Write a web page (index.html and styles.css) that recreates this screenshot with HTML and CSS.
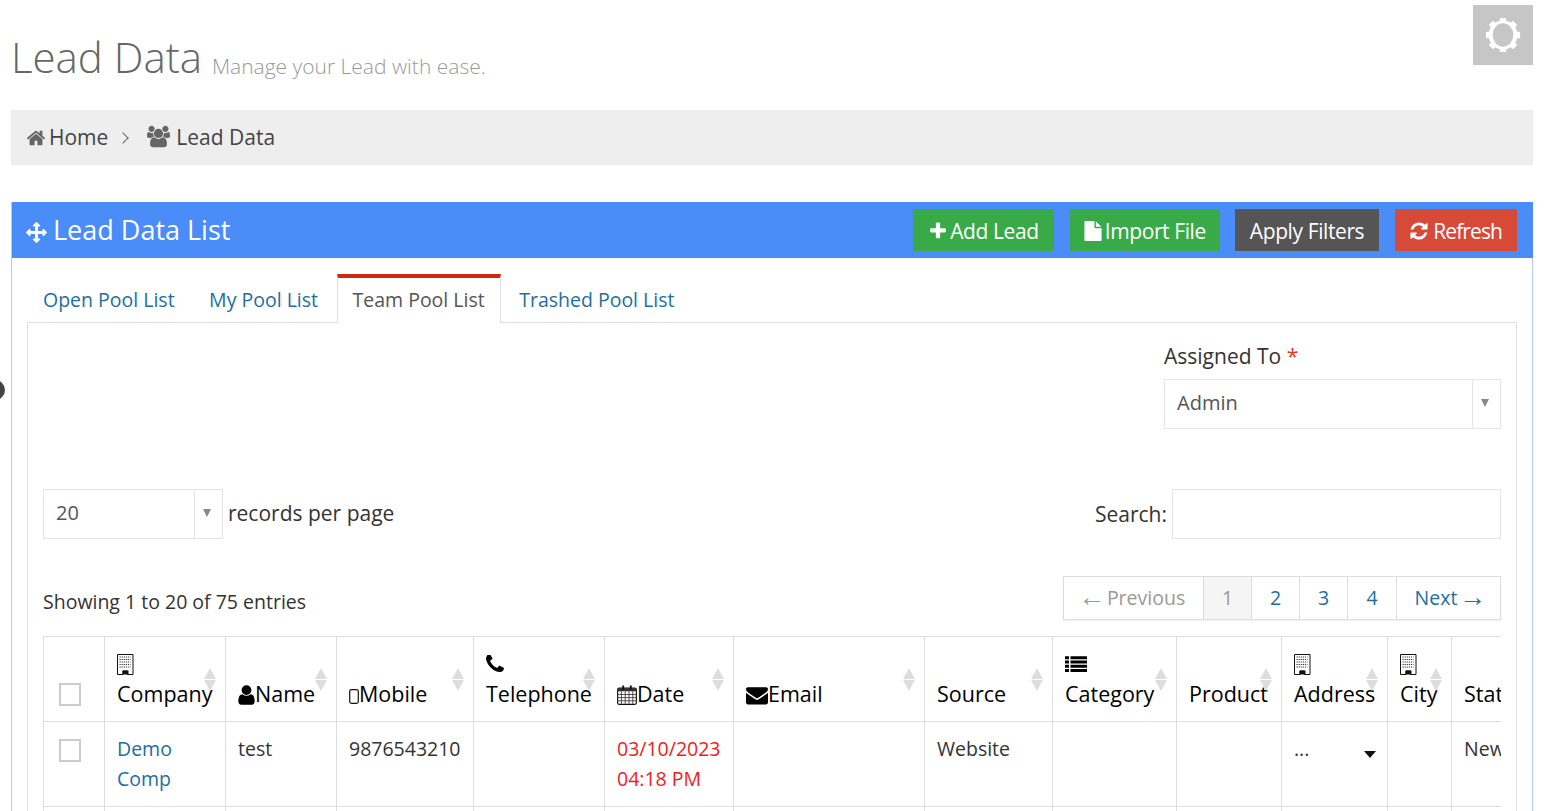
FILE: index.html
```html
<!DOCTYPE html>
<html lang="en">
<head>
<meta charset="utf-8">
<title>Lead Data</title>
<link rel="stylesheet" href="styles.css">
</head>
<body>
<svg class="defs" aria-hidden="true">
  <symbol id="i-home" viewBox="0 0 1792 1792"><path d="M1472 992v480q0 26-19 45t-45 19h-384v-384h-256v384h-384q-26 0-45-19t-19-45v-480q0-1 .5-3t.5-3l575-474 575 474q1 2 1 6zm223-69l-62 74q-8 9-21 11h-3q-13 0-21-7l-692-577-692 577q-12 8-24 7-13-2-21-11l-62-74q-8-10-7-23.500t11-21.500l719-599q32-26 76-26t76 26l244 204v-195q0-14 9-23t23-9h192q14 0 23 9t9 23v408l219 182q10 8 11 21.500t-7 23.500z"/></symbol>
  <symbol id="i-users" viewBox="0 0 1920 1792"><path d="M593 896q-162 5-265 128h-134q-82 0-138-40.500t-56-118.500q0-353 124-353 6 0 43.500 21t97.500 42.500 119 21.500q67 0 133-23-5 37-5 66 0 139 81 256zm1071 637q0 120-73 189.500t-194 69.500h-874q-121 0-194-69.500t-73-189.500q0-53 3.500-103.500t14-109 26.500-108.500 43-97.500 62-81 85.500-53.500 111.500-20q10 0 43 21.500t73 48 107 48 135 21.500 135-21.500 107-48 73-48 43-21.500q61 0 111.500 20t85.500 53.500 62 81 43 97.500 26.500 108.500 14 109 3.500 103.500zm-1024-1277q0 106-75 181t-181 75-181-75-75-181 75-181 181-75 181 75 75 181zm704 384q0 159-112.500 271.500t-271.500 112.500-271.500-112.500-112.500-271.500 112.500-271.500 271.500-112.500 271.500 112.500 112.500 271.500zm576 225q0 78-56 118.500t-138 40.500h-134q-103-123-265-128 81-117 81-256 0-29-5-66 66 23 133 23 59 0 119-21.500t97.500-42.500 43.500-21q124 0 124 353zm-128-609q0 106-75 181t-181 75-181-75-75-181 75-181 181-75 181 75 75 181z"/></symbol>
  <symbol id="i-arrows" viewBox="0 0 1792 1792"><path d="M1792 896q0 26-19 45l-256 256q-19 19-45 19t-45-19-19-45v-128h-384v384h128q26 0 45 19t19 45-19 45l-256 256q-19 19-45 19t-45-19l-256-256q-19-19-19-45t19-45 45-19h128v-384h-384v128q0 26-19 45t-45 19-45-19l-256-256q-19-19-19-45t19-45l256-256q19-19 45-19t45 19 19 45v128h384v-384h-128q-26 0-45-19t-19-45 19-45l256-256q19-19 45-19t45 19l256 256q19 19 19 45t-19 45-45 19h-128v384h384v-128q0-26 19-45t45-19 45 19l256 256q19 19 19 45z"/></symbol>
  <symbol id="i-plus" viewBox="0 0 1792 1792"><path d="M1600 736v192q0 40-28 68t-68 28h-416v416q0 40-28 68t-68 28h-192q-40 0-68-28t-28-68v-416h-416q-40 0-68-28t-28-68v-192q0-40 28-68t68-28h416v-416q0-40 28-68t68-28h192q40 0 68 28t28 68v416h416q40 0 68 28t28 68z"/></symbol>
  <symbol id="i-file" viewBox="0 0 1792 1792"><path d="M1152 512v-472q22 14 36 28l408 408q14 14 28 36h-472zm-128 32q0 40 28 68t68 28h544v1056q0 40-28 68t-68 28h-1344q-40 0-68-28t-28-68v-1600q0-40 28-68t68-28h800v544z"/></symbol>
  <symbol id="i-refresh" viewBox="0 0 1792 1792"><path d="M1639 1056q0 5-1 7-64 268-268 434.500t-478 166.500q-146 0-282.500-55t-243.500-157l-129 129q-19 19-45 19t-45-19-19-45v-448q0-26 19-45t45-19h448q26 0 45 19t19 45-19 45l-137 137q71 66 161 102t187 36q134 0 250-65t186-179q11-17 53-117 8-23 30-23h192q13 0 22.500 9.500t9.500 22.500zm25-800v448q0 26-19 45t-45 19h-448q-26 0-45-19t-19-45 19-45l138-138q-148-137-349-137-134 0-250 65t-186 179q-11 17-53 117-8 23-30 23h-199q-13 0-22.500-9.500t-9.500-22.500v-7q65-268 270-434.500t480-166.500q146 0 284 55.500t245 156.500l130-129q19-19 45-19t45 19 19 45z"/></symbol>
  <symbol id="i-user" viewBox="240 110 1312 1570"><path d="M1536 1399q0 109-62.500 187t-150.500 78h-854q-88 0-150.500-78t-62.500-187q0-85 8.500-160.500t31.500-152 58.500-131 94-89 134.500-34.500q131 128 313 128t313-128q76 0 134.500 34.500t94 89 58.500 131 31.500 152 8.500 160.500zm-256-887q0 159-112.500 271.500t-271.500 112.500-271.500-112.500-112.500-271.500 112.500-271.500 271.500-112.500 271.500 112.500 112.500 271.500z"/></symbol>
  <symbol id="i-mail" viewBox="0 0 1792 1792"><path d="M1792 710v794q0 66-47 113t-113 47h-1472q-66 0-113-47t-47-113v-794q44 49 101 87 362 246 497 345 57 42 92.500 65.500t94.500 48 110 24.500h2q51 0 110-24.500t94.500-48 92.500-65.500q170-123 498-345 57-39 100-87zm0-294q0 79-49 151t-122 123q-376 261-468 325-10 7-42.500 30.500t-54 38-52 32.500-57.500 27-50 9h-2q-23 0-50-9t-57.500-27-52-32.500-54-38-42.500-30.500q-91-64-262-182.500t-205-142.500q-62-42-117-115.500t-55-136.500q0-78 41.500-130t118.500-52h1472q65 0 112.500 47t47.500 113z"/></symbol>
  <symbol id="i-phone" viewBox="190 190 1420 1420"><path d="M1600 1240q0 27-10 70.500t-21 68.500q-21 50-122 106-94 51-186 51-27 0-53-3.500t-57.500-12.500-47-14.500-55.500-20.500-49-18q-98-35-175-83-127-79-264-216t-216-264q-48-77-83-175-3-9-18-49t-20.500-55.500-14.500-47-12.500-57.500-3.500-53q0-92 51-186 56-101 106-122 25-11 68.500-21t70.500-10q14 0 21 3 18 6 53 76 11 19 30 54t35 63.500 31 53.500q3 4 17.500 25t21.500 35.500 7 28.500q0 20-28.500 50t-62 55-62 53-28.500 46q0 9 5 22.500t8.500 20.500 14 24 11.500 19q76 137 174 235t235 174q2 1 19 11.500t24 14 20.500 8.500 22.500 5q18 0 46-28.500t53-62 55-62 50-28.500q14 0 28.500 7t35.500 21.500 25 17.500q25 15 53.500 31t63.500 35 54 30q70 35 76 53 3 7 3 21z"/></symbol>
  <symbol id="i-building" viewBox="0 0 17 21"><path d="M.5.500h15.500v20h-5.500v-3.500h-4.500v3.500h-5.500z" fill="#fff" stroke="#111" stroke-width="1"/><path d="M2.500 3h11M2.500 5.500h11M2.500 8h11M2.500 10.500h11M2.500 13h11" stroke="#333" stroke-width="1.200" stroke-dasharray="1.200 .9" fill="none"/><path d="M5.500 16.500h6v4h-6z" fill="#111"/></symbol>
  <symbol id="i-mobile" viewBox="0 0 10 15"><rect x=".7" y=".7" width="8.600" height="13.600" rx="1.800" fill="#fff" stroke="#111" stroke-width="1.200"/></symbol>
  <symbol id="i-calendar" viewBox="0 0 19 19"><rect x=".6" y="3" width="17.800" height="15.400" rx="1.500" fill="#fff" stroke="#111" stroke-width="1.100"/><path d="M.6 3h17.800v3h-17.800z" fill="#333"/><path d="M5 .5h1.800v4h-1.800zM12.200 .5h1.800v4h-1.800z" fill="#111"/><path d="M.6 9h17.800M.6 12h17.800M.6 15h17.800M4.200 6v12M7.800 6v12M11.400 6v12M15 6v12" stroke="#444" stroke-width=".9" fill="none"/></symbol>
  <symbol id="i-list" viewBox="0 0 22 16"><path d="M0 .3h4v3h-4zM5.500 .3h16.500v3h-16.500zM0 4.500h4v3h-4zM5.500 4.500h16.500v3h-16.500zM0 8.700h4v3h-4zM5.500 8.700h16.500v3h-16.500zM0 12.900h4v3h-4zM5.500 12.900h16.500v3h-16.500z"/></symbol>
</svg>

<button class="settings" type="button" aria-label="Settings">
  <svg class="gear" viewBox="0 0 40 40"><g fill="#fff"><rect x="16.500" y="1" width="7" height="38" rx="1"/><rect x="16.500" y="1" width="7" height="38" rx="1" transform="rotate(45 20 20)"/><rect x="16.500" y="1" width="7" height="38" rx="1" transform="rotate(90 20 20)"/><rect x="16.500" y="1" width="7" height="38" rx="1" transform="rotate(135 20 20)"/><circle cx="20" cy="20" r="16"/></g><ellipse cx="20" cy="20" rx="11.500" ry="13" fill="#c6c6c6"/></svg>
</button>
<span class="side-toggle"></span>

<main class="page">
  <h1 class="page-title">Lead Data <small>Manage your Lead with ease.</small></h1>

  <nav class="crumbs">
    <svg class="crumb-home"><use href="#i-home"/></svg>
    <span>Home</span>
    <span class="crumb-sep"></span>
    <svg class="crumb-users"><use href="#i-users"/></svg>
    <span>Lead Data</span>
  </nav>

  <section class="portlet">
    <header class="portlet-title">
      <h2 class="caption"><svg class="caption-icon"><use href="#i-arrows"/></svg>Lead Data List</h2>
      <div class="actions">
        <a class="btn btn-add"><svg class="btn-icon"><use href="#i-plus"/></svg>Add Lead</a>
        <a class="btn btn-import"><svg class="btn-icon"><use href="#i-file"/></svg>Import File</a>
        <a class="btn btn-filter">Apply Filters</a>
        <a class="btn btn-refresh"><svg class="btn-icon"><use href="#i-refresh"/></svg>Refresh</a>
      </div>
    </header>

    <div class="portlet-body">
      <ul class="tabs">
        <li class="tab">Open Pool List</li>
        <li class="tab">My Pool List</li>
        <li class="tab tab-active">Team Pool List</li>
        <li class="tab">Trashed Pool List</li>
      </ul>

      <div class="tab-pane">
        <div class="assign-row">
          <div class="assign-field">
            <label class="assign-label">Assigned To <span class="req">*</span></label>
            <div class="select select-assign"><span class="select-value">Admin</span><span class="select-arrow"></span></div>
          </div>
        </div>

        <div class="length-row">
          <div class="length">
            <div class="select select-length"><span class="select-value">20</span><span class="select-arrow"></span></div>
            <span class="length-text">records per page</span>
          </div>
          <div class="search"><span>Search:</span><input class="search-input" type="text" aria-label="Search"></div>
        </div>

        <div class="info-row">
          <div class="info">Showing 1 to 20 of 75 entries</div>
          <ul class="pager">
            <li class="pg pg-prev"><span class="pg-arrow">←</span> Previous</li>
            <li class="pg pg-num pg-current">1</li>
            <li class="pg pg-num">2</li>
            <li class="pg pg-num">3</li>
            <li class="pg pg-num pg-last">4</li>
            <li class="pg pg-next">Next <span class="pg-arrow">→</span></li>
          </ul>
        </div>

        <div class="table-wrap">
          <table class="leads">
            <colgroup>
              <col class="c-check"><col class="c-company"><col class="c-name"><col class="c-mobile"><col class="c-tel"><col class="c-date"><col class="c-email"><col class="c-source"><col class="c-cat"><col class="c-product"><col class="c-address"><col class="c-city"><col class="c-status">
            </colgroup>
            <thead>
              <tr>
                <th class="cell-check"><span class="check"></span></th>
                <th><svg class="th-building"><use href="#i-building"/></svg> Company<i class="sort"></i></th>
                <th><svg class="th-user"><use href="#i-user"/></svg>Name<i class="sort"></i></th>
                <th><svg class="th-mobile"><use href="#i-mobile"/></svg>Mobile<i class="sort"></i></th>
                <th><svg class="th-phone"><use href="#i-phone"/></svg> Telephone<i class="sort"></i></th>
                <th><svg class="th-cal"><use href="#i-calendar"/></svg>Date<i class="sort"></i></th>
                <th><svg class="th-mail"><use href="#i-mail"/></svg>Email<i class="sort"></i></th>
                <th>Source<i class="sort"></i></th>
                <th><svg class="th-list"><use href="#i-list"/></svg> Category<i class="sort"></i></th>
                <th>Product<i class="sort"></i></th>
                <th><svg class="th-building"><use href="#i-building"/></svg> Address<i class="sort"></i></th>
                <th><svg class="th-building"><use href="#i-building"/></svg> City<i class="sort"></i></th>
                <th>Status<i class="sort"></i></th>
              </tr>
            </thead>
            <tbody>
              <tr>
                <td class="cell-check"><span class="check"></span></td>
                <td><a class="link">Demo Comp</a></td>
                <td>test</td>
                <td>9876543210</td>
                <td></td>
                <td class="overdue">03/10/2023 04:18 PM</td>
                <td></td>
                <td>Website</td>
                <td></td>
                <td></td>
                <td class="cell-more"><span class="more-dots">...</span><i class="caret"></i></td>
                <td></td>
                <td>New</td>
              </tr>
              <tr class="row-next">
                <td></td><td></td><td></td><td></td><td></td><td></td><td></td><td></td><td></td><td></td><td></td><td></td><td></td>
              </tr>
            </tbody>
          </table>
        </div>
      </div>
    </div>
  </section>
</main>
</body>
</html>
```

FILE: styles.css
```css
* { box-sizing: border-box; }
html, body { margin: 0; height: 811px; overflow: hidden; background: #fff; }
body { font-family: "Open Sans", sans-serif; font-size: 19.5px; line-height: 30px; color: #333; }
.defs { display: none; }
svg { fill: currentColor; }
ul { list-style: none; margin: 0; padding: 0; }

.settings { position: absolute; top: 5px; left: 1473px; width: 60px; height: 60px; padding: 0; border: 0; background: #c6c6c6; display: flex; align-items: center; justify-content: center; }
.gear { width: 36px; height: 36px; }
.side-toggle { position: absolute; left: -15px; top: 380px; width: 20px; height: 20px; border-radius: 50%; background: #444; }

.page { padding: 0 13px 0 11px; }
.page-title { margin: 0; padding-top: 32px; height: 110px; font-size: 42px; line-height: 50px; font-weight: 300; color: #666; }
.page-title small { font-size: 21px; font-weight: 300; color: #999; margin-left: -1px; position: relative; top: 1px; }

.crumbs { height: 55px; margin-bottom: 37px; padding: 0 0 2px 15px; background: #eee; display: flex; align-items: center; font-size: 21px; color: #444; }
.crumb-home { width: 20px; height: 20px; margin: 2px 3px 0 0; color: #666; }
.crumb-sep { width: 8px; height: 8px; margin: 2px 20px 0 11px; border-top: 1.5px solid #666; border-right: 1.5px solid #666; transform: rotate(45deg); }
.crumb-users { width: 23px; height: 23px; margin: 0 6px 0 0; color: #666; }

.portlet { border: 1px solid #b3c9f6; border-top: 0; height: 640px; }
.portlet-title { height: 56px; margin: 0 -1px 0 0; padding: 7px 16px 7px 14px; background: #4a8cf8; display: flex; justify-content: space-between; color: #fff; }
.caption { margin: 0; font-size: 27px; font-weight: 400; line-height: 40px; display: flex; align-items: center; padding-bottom: 1px; }
.caption-icon { width: 21px; height: 21px; margin-right: 6px; margin-top: 6px; }
.actions { display: flex; gap: 16px; }
.btn { height: 42px; padding: 2px 15px 0; display: flex; align-items: center; color: #fff; font-size: 21px; letter-spacing: -.4px; }
.btn-icon { width: 20px; height: 20px; margin-right: 2px; }
.btn-add, .btn-import { background: #38aa48; }
.btn-import { padding: 2px 14px 0 13px; margin-right: -1px; }
.btn-filter { background: #555; }
.btn-refresh { background: #d84a38; letter-spacing: -.9px; padding-left: 14px; }
.btn-refresh .btn-icon { margin-right: 4px; }

.portlet-body { padding: 16px 15px 0; }
.tabs { display: flex; gap: 2.500px; height: 49px; position: relative; }
.tab { padding: 7px 15px 0; border: 1px solid transparent; border-top-width: 4px; color: #1c6f9e; height: 49px; line-height: 30px; }
.tab-active { border-color: #ddd; border-top-color: #d12610; border-bottom: 0; background: #fff; color: #555; position: relative; z-index: 1; }
.tab-pane { margin-top: -1px; border: 1px solid #ddd; padding: 18px 15px 0; height: 560px; }

.assign-row { display: flex; justify-content: flex-end; margin-bottom: 60px; }
.assign-field { width: 337px; }
.assign-label { display: block; margin-bottom: 8px; font-size: 21px; color: #333; }
.req { color: #e43a17; }
.select { height: 50px; border: 1px solid #e5e5e5; display: flex; align-items: center; color: #555; font-size: 20px; }
.select-value { flex: 1; padding: 0 0 2px 12px; }
.select-arrow { width: 28px; height: 48px; border-left: 1px solid #e5e5e5; position: relative; }
.select-arrow::after { content: ""; position: absolute; left: 8px; top: 19px; border: 4.500px solid transparent; border-top: 8px solid #888; border-bottom: 0; }
.select-length { width: 180px; }

.length-row { display: flex; justify-content: space-between; height: 50px; margin-bottom: 37px; }
.length { display: flex; align-items: center; gap: 5px; font-size: 21px; }
.length-text { padding-bottom: 3px; }
.search { display: flex; align-items: center; gap: 5px; font-size: 21px; }
.search-input { width: 329px; height: 50px; border: 1px solid #e5e5e5; padding: 0; background: #fff; }

.info-row { display: flex; justify-content: space-between; height: 44px; margin-bottom: 16px; }
.info { padding-top: 11px; }
.pager { display: flex; height: 44px; border: 1px solid #ddd; box-shadow: 0 1px 2px rgba(0,0,0,.06); }
.pg { height: 42px; line-height: 42px; text-align: center; color: #1c6f9e; border-left: 1px solid #ddd; }
.pg-prev { width: 139px; border-left: 0; color: #999; word-spacing: -3.500px; padding-right: 3.500px; }
.pg-num { width: 48px; }
.pg-last { width: 49px; }
.pg-next { width: 104px; word-spacing: -3.500px; padding-left: 3.500px; }
.pg-current { background: #f5f5f5; color: #999; }
.pg-arrow { font-family: "Liberation Sans", sans-serif; font-size: 27px; line-height: 0; vertical-align: -1px; }

.table-wrap { width: 1458px; overflow: hidden; border-top: 1px solid #ddd; }
.leads { table-layout: fixed; border-collapse: collapse; width: 1550px; border-left: 1px solid #ddd; }
.c-check { width: 61px; } .c-company { width: 121px; } .c-name { width: 111px; } .c-mobile { width: 137px; } .c-tel { width: 131px; } .c-date { width: 129px; } .c-email { width: 191px; } .c-source { width: 128px; } .c-cat { width: 124px; } .c-product { width: 105px; } .c-address { width: 106px; } .c-city { width: 64px; } .c-status { width: 142px; }
.leads th, .leads td { border: 1px solid #ddd; border-top: 0; padding: 12px; vertical-align: top; overflow: hidden; }
.leads th { height: 84px; vertical-align: bottom; font-size: 21.5px; font-weight: 400; color: #000; text-align: left; position: relative; padding: 0 12px 12px; white-space: normal; }
.leads td { height: 85px; }
.leads .row-next td { height: 60px; }
.leads .cell-check { padding-left: 15px; padding-right: 0; }
.check { display: inline-block; width: 22px; height: 23px; border: 2px solid #ccc; background: #fff; vertical-align: top; }
td.cell-check .check { margin-top: 5px; }
th.cell-check .check { margin-bottom: 3px; vertical-align: bottom; }
.sort { position: absolute; right: 8px; top: 31px; width: 13px; height: 23px; }
.sort::before, .sort::after { content: ""; position: absolute; left: 0; border: 6.500px solid transparent; }
.sort::before { top: 0; border-top: 0; border-bottom: 11px solid #ddd; }
.sort::after { top: 12px; border-bottom: 0; border-top: 11px solid #ddd; }
.link { color: #1c6f9e; }
.overdue { color: #f11c1c; }
.cell-more { position: relative; }
.caret { position: absolute; right: 11px; top: 29px; border: 6px solid transparent; border-top: 7px solid #111; border-bottom: 0; }

.th-building { width: 17px; height: 21px; display: inline-block; vertical-align: -3px; }
.th-user { width: 17px; height: 20px; vertical-align: -3px; }
.th-mobile { width: 10px; height: 15px; vertical-align: -2px; }
.th-phone { width: 18px; height: 18px; vertical-align: -1px; }
.th-cal { width: 20px; height: 20px; vertical-align: -3px; }
.th-mail { width: 22px; height: 22px; vertical-align: -4px; }
.th-list { width: 22px; height: 16px; vertical-align: 0; }
```
